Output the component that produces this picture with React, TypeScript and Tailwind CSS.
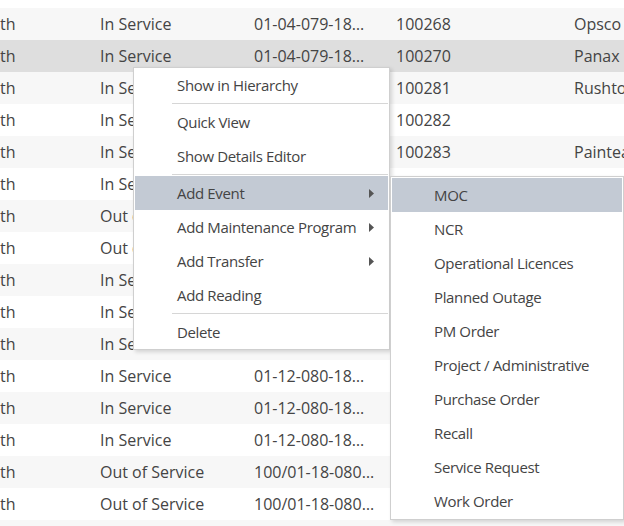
import React from "react";

type Row = [string, string, string, string, string];

const rows: Row[] = [
  ["th", "In Service", "01-04-079-18…", "100268", "Opsco"],
  ["th", "In Service", "01-04-079-18…", "100270", "Panax"],
  ["th", "In Service", "01-04-079-18…", "100281", "Rushton"],
  ["th", "In Service", "01-04-079-18…", "100282", ""],
  ["th", "In Service", "01-04-079-18…", "100283", "Painteau"],
  ["th", "In Service", "01-04-079-18…", "", ""],
  ["th", "Out of Service", "01-05-079-18…", "", ""],
  ["th", "Out of Service", "01-05-079-18…", "", ""],
  ["th", "In Service", "01-06-079-18…", "", ""],
  ["th", "In Service", "01-07-079-18…", "", ""],
  ["th", "In Service", "01-08-079-18…", "", ""],
  ["th", "In Service", "01-12-080-18…", "", ""],
  ["th", "In Service", "01-12-080-18…", "", ""],
  ["th", "In Service", "01-12-080-18…", "", ""],
  ["th", "Out of Service", "100/01-18-080…", "", ""],
  ["th", "Out of Service", "100/01-18-080…", "", ""],
  ["", "", "", "", ""],
];

const Arrow = () => (
  <svg width="5" height="9" viewBox="0 0 5 9" className="block shrink-0">
    <polygon points="0,0 5,4.5 0,9" fill="#555" />
  </svg>
);

const Sep = () => <div className="h-px my-px ml-[37px] bg-[#d6d6d6]" />;

const MenuItem = ({ label, sub, active }: { label: string; sub?: boolean; active?: boolean }) => (
  <div
    className={`h-[34px] flex items-center justify-between pl-[42px] pr-[14px] whitespace-nowrap ${
      active ? "bg-[#c3cad4]" : ""
    }`}
  >
    <span>{label}</span>
    {sub ? <Arrow /> : null}
  </div>
);

const subItems = [
  "MOC",
  "NCR",
  "Operational Licences",
  "Planned Outage",
  "PM Order",
  "Project / Administrative",
  "Purchase Order",
  "Recall",
  "Service Request",
  "Work Order",
];

export default function App() {
  return (
    <div
      className="relative w-[624px] h-[526px] overflow-hidden bg-white text-[#444] text-[16px]"
      style={{ fontFamily: '"Open Sans", "Noto Sans", sans-serif' }}
    >
      <div className="pt-[8px] flex flex-col">
        {rows.map((r, i) => (
          <div
            key={i}
            className={`h-[32px] flex items-center whitespace-nowrap ${
              i === 1 ? "bg-[#dedede]" : i % 2 === 0 ? "bg-[#f7f7f7]" : "bg-white"
            }`}
          >
            <div className="w-[100px] shrink-0">{r[0]}</div>
            <div className="w-[154px] shrink-0">{r[1]}</div>
            <div className="w-[142px] shrink-0">{r[2]}</div>
            <div className="w-[178px] shrink-0">{r[3]}</div>
            <div className="w-[50px] shrink-0 overflow-hidden">{r[4]}</div>
          </div>
        ))}
      </div>

      {/* Context menu */}
      <div className="absolute left-[133px] top-[67px] w-[257px] bg-white border border-[#cfcfcf] px-px text-[15px] tracking-[-0.35px] shadow-[2px_2px_4px_rgba(0,0,0,0.15)]">
        <MenuItem label="Show in Hierarchy" />
        <Sep />
        <MenuItem label="Quick View" />
        <MenuItem label="Show Details Editor" />
        <Sep />
        <MenuItem label="Add Event" sub active />
        <MenuItem label="Add Maintenance Program" sub />
        <MenuItem label="Add Transfer" sub />
        <MenuItem label="Add Reading" />
        <Sep />
        <MenuItem label="Delete" />
      </div>

      {/* Submenu */}
      <div className="absolute left-[390px] top-[176px] w-[234px] bg-white border border-[#cfcfcf] px-px pt-px pb-px text-[15px] tracking-[-0.35px] shadow-[2px_2px_4px_rgba(0,0,0,0.15)]">
        {subItems.map((s, i) => (
          <MenuItem key={s} label={s} active={i === 0} />
        ))}
      </div>
    </div>
  );
}
